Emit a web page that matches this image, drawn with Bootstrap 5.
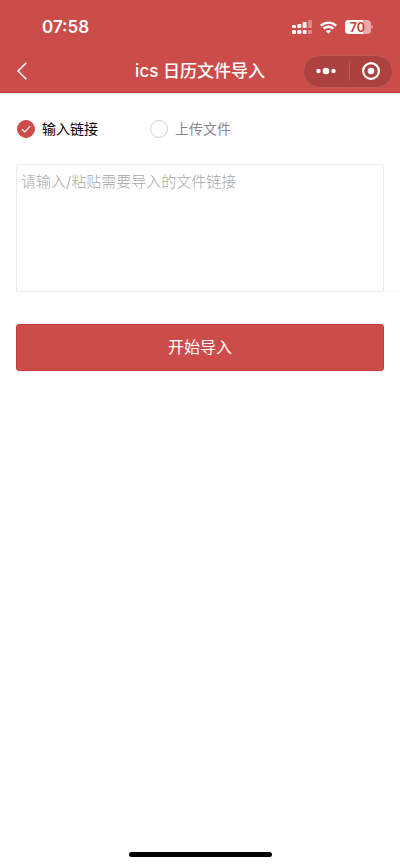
<!DOCTYPE html>
<html lang="zh-CN">
<head>
<meta charset="utf-8">
<meta name="viewport" content="width=device-width, initial-scale=1">
<title>ics日历文件导入</title>
<link href="https://cdn.jsdelivr.net/npm/bootstrap@5.3.0/dist/css/bootstrap.min.css" rel="stylesheet">
<style>
  :root { --brand: #cc4c4a; --brand-edge: #c53a38; }
  body { font-family: Inter, "Noto Sans CJK SC", sans-serif; font-size: 14px; color: #000; background: #fff; }
  .app-header { background: var(--brand); color: #fff; border-bottom: 1px solid var(--brand-edge); }
  .status-bar { height: 48px; padding: 6px 27px 0 42px; }
  .clock { font-size: 17px; line-height: 24px; font-weight: 600; }
  .title-bar { display: grid; grid-template-columns: 1fr auto 1fr; height: 44px; padding: 2px 7px 0; }
  .page-title { font-size: 17px; line-height: 24px; font-weight: 500; }
  .back-btn { width: 30px; height: 32px; }
  .capsule { width: 90px; height: 33px; background: #ad4140; border: 1px solid #bd5b59; border-radius: 17px; }
  .capsule-divider { width: 1px; height: 19px; background: #bd5b59; }
  .mode-row { padding: 25px 17px 24px; gap: 52px; }
  .mode { gap: 7px; line-height: 22px; color: #888; }
  .mode:has(:checked) { color: #000; }
  .mode .form-check-input { width: 18px; height: 18px; border: 1px solid #d0d0d0; box-shadow: none; }
  .mode .form-check-input:checked {
    background-color: var(--brand); border-color: var(--brand);
    background-image: url("data:image/svg+xml,%3Csvg xmlns='http://www.w3.org/2000/svg' viewBox='0 0 16 16'%3E%3Cpath fill='none' stroke='%23fff' stroke-width='1.1' d='M4 8.2l2.7 2.7L12.2 5.2'/%3E%3C/svg%3E");
  }
  .link-field { border-bottom: 1px solid #f7f7f7; padding-right: 16px; margin: 0 0 32px 16px; }
  .link-input { height: 128px; margin-bottom: -1px; padding: 6px 4px; font-size: 15px; line-height: 22px; border: 1px solid #ececec; border-radius: 2px; resize: none; }
  .link-input::placeholder { color: #a8a8a8; font-weight: 300; }
  .import-btn { height: 47px; padding: 0 0 2px; font-size: 16px; line-height: 24px; color: #fff; background: var(--brand); border: 1px solid var(--brand-edge); border-radius: 3px; }
  .home-bar { width: 143px; height: 5px; background: #000; border-radius: 3px; margin-bottom: 8px; }
</style>
<script src="https://cdn.jsdelivr.net/npm/bootstrap@5.3.0/dist/js/bootstrap.bundle.min.js"></script>
</head>
<body class="d-flex flex-column min-vh-100">
<header class="app-header">
  <div class="status-bar d-flex align-items-center justify-content-between">
    <time class="clock">07:58</time>
    <div class="d-flex align-items-center">
      <svg width="20" height="14" viewBox="0 0 20 14" fill="#fff" class="me-2" role="img" aria-label="信号">
        <g><rect y="5" width="4" height="3" rx="1"/><rect x="5.300" y="4" width="4" height="4" rx="1"/><rect x="10.600" y="2" width="4" height="6" rx="1"/>
        <rect y="10" width="4" height="4" rx="1"/><rect x="5.300" y="10" width="4" height="4" rx="1"/><rect x="10.600" y="10" width="4" height="4" rx="1"/></g>
        <g opacity=".35"><rect x="16" width="4" height="8" rx="1"/><rect x="16" y="10" width="4" height="4" rx="1"/></g>
      </svg>
      <svg width="17" height="13" viewBox="0 0 17 13" fill="none" stroke="#fff" stroke-width="2.4" role="img" aria-label="无线网络">
        <path d="M.8 4.8C5 .5 12 .5 16.200 4.800M3.600 7.700C6.300 5 10.700 5 13.400 7.700"/>
        <path d="M8.500 12.800L5.800 10C7.300 8.600 9.700 8.600 11.200 10Z" fill="#fff" stroke="none"/>
      </svg>
      <svg width="28" height="14" viewBox="0 0 28 14" class="ms-2" role="img" aria-label="电量 70%">
        <defs><clipPath id="level"><rect width="18" height="14"/></clipPath></defs>
        <rect width="26" height="14" rx="4" fill="#e8a9a8"/>
        <rect width="26" height="14" rx="4" fill="#fff" clip-path="url(#level)"/>
        <path d="M26.500 5Q28 5.500 28 7T26.500 9Z" fill="#e8a9a8"/>
        <text x="12.500" y="11.500" text-anchor="middle" font-size="12.500" font-weight="600" fill="#c53a38">70</text>
      </svg>
    </div>
  </div>
  <div class="title-bar align-items-center">
    <button type="button" class="back-btn btn p-0 border-0 d-flex align-items-center justify-content-center" aria-label="返回">
      <svg width="10" height="18" viewBox="0 0 10 18" fill="none" stroke="#fff" stroke-width="1.5"><path d="M9.300 .7L1 9l8.300 8.300"/></svg>
    </button>
    <h1 class="page-title m-0">ics 日历文件导入</h1>
    <div class="capsule d-flex align-items-center justify-content-between ms-auto">
      <button type="button" class="btn p-0 border-0 flex-fill d-flex justify-content-center" aria-label="更多">
        <svg width="20" height="8" viewBox="0 0 20 8" fill="#fff"><circle cx="2.500" cy="4" r="2.200"/><circle cx="10" cy="4" r="3.300"/><circle cx="17.500" cy="4" r="2.200"/></svg>
      </button>
      <span class="capsule-divider"></span>
      <button type="button" class="btn p-0 border-0 flex-fill d-flex justify-content-center" aria-label="关闭">
        <svg width="18" height="18" viewBox="0 0 18 18"><circle cx="9" cy="9" r="7.900" fill="none" stroke="#fff" stroke-width="2.200"/><circle cx="9" cy="9" r="3.300" fill="#fff"/></svg>
      </button>
    </div>
  </div>
</header>
<main class="flex-grow-1">
  <div class="mode-row d-flex">
    <label class="mode d-flex align-items-center" for="mode-link"><input class="form-check-input m-0" type="radio" name="mode" id="mode-link" checked>输入链接</label>
    <label class="mode d-flex align-items-center" for="mode-file"><input class="form-check-input m-0" type="radio" name="mode" id="mode-file">上传文件</label>
  </div>
  <div class="link-field">
    <textarea class="link-input form-control" id="link-text" aria-label="文件链接" placeholder="请输入/粘贴需要导入的文件链接"></textarea>
  </div>
  <div class="px-3"><button type="button" class="import-btn btn w-100">开始导入</button></div>
</main>
<div class="home-bar mx-auto"></div>
</body>
</html>
